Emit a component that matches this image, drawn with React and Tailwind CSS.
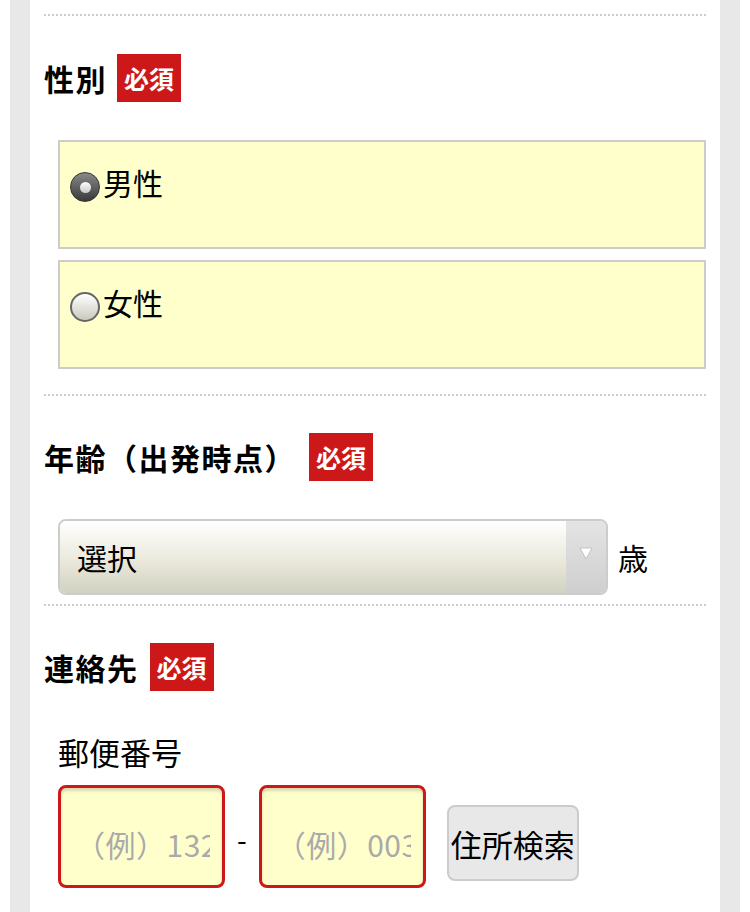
import { useState } from "react"

function Badge({ className = "ml-[13px]" }) {
  return (
    <span
      className={
        "inline-flex h-[48px] w-[64px] shrink-0 items-center justify-center bg-[#cc1818] text-[25px] font-bold leading-none text-white " +
        className
      }
    >
      必須
    </span>
  )
}

function Heading({ children, badgeGap }) {
  return (
    <div className="flex h-[48px] items-center">
      <h2 className="text-[30px] font-bold leading-none tracking-[1.5px] text-black">{children}</h2>
      <Badge className={badgeGap} />
    </div>
  )
}

function Radio({ checked }) {
  if (checked) {
    return (
      <span className="flex h-[30px] w-[30px] shrink-0 items-center justify-center rounded-full border border-[#333] bg-gradient-to-b from-[#8a8a8a] to-[#3a3a3a]">
        <span className="h-[11px] w-[11px] rounded-full bg-gradient-to-b from-[#ffffff] to-[#c8c8c8]" />
      </span>
    )
  }
  return (
    <span className="h-[30px] w-[30px] shrink-0 rounded-full border-2 border-[#666] bg-gradient-to-b from-[#ffffff] to-[#c9c9bd]" />
  )
}

function Dotted({ className = "" }) {
  return <div className={"border-t-2 border-dotted border-[#cccccc] " + className} />
}

const inputCls =
  "h-[103px] w-[167px] rounded-[8px] border-[3px] border-[#cc1818] bg-[#ffffcc] pl-[14px] pr-[12px] pt-[14px] text-[30px] tracking-[0.5px] shadow-[inset_0_3px_3px_rgba(0,0,0,0.15)] outline-none placeholder:text-[#aaaaaa]"

export default function App() {
  const [gender, setGender] = useState("male")

  return (
    <div className="min-h-[912px] bg-white px-[10px] font-['Noto_Sans_CJK_JP','Noto_Sans',sans-serif] text-black">
      <div className="min-h-[912px] bg-[#e8e8e8] px-[20px]">
        <div className="min-h-[912px] bg-white px-[14px] pb-[40px] pt-[14px]">
          <Dotted />

          {/* 性別 */}
          <div className="mt-[38px]">
            <Heading badgeGap="ml-[10px]">性別</Heading>
          </div>
          <div className="mt-[38px] flex flex-col gap-[11px] pl-[14px]">
            {[
              ["male", "男性"],
              ["female", "女性"],
            ].map(([key, label]) => (
              <button
                key={key}
                onClick={() => setGender(key)}
                className="flex h-[109px] items-start border-2 border-[#cccccc] bg-[#ffffcc] pl-[10px] pt-[30px] text-left"
              >
                <Radio checked={gender === key} />
                <span className="ml-[3px] -mt-[8px] text-[30px] leading-[36px]">{label}</span>
              </button>
            ))}
          </div>

          <Dotted className="mt-[25px]" />

          {/* 年齢 */}
          <div className="mt-[37px]">
            <Heading badgeGap="ml-[13px]">年齢（出発時点）</Heading>
          </div>
          <div className="mt-[38px] flex items-center pl-[14px]">
            <div className="flex h-[76px] w-[550px] overflow-hidden rounded-[8px] border-2 border-[#cccccc]">
              <div className="flex flex-1 items-center bg-gradient-to-b from-[#ffffff] via-[#ecebdf] to-[#d2d2c0] pl-[17px] text-[30px]">
                選択
              </div>
              <div className="flex w-[40px] justify-center bg-gradient-to-b from-[#e4e4e4] to-[#cfcfcf] pt-[26px]">
                <svg width="14" height="13" viewBox="0 0 14 13">
                  <path d="M1 1 H13 L7 12 Z" fill="#ffffff" stroke="#b8b8b8" strokeWidth="0.8" />
                </svg>
              </div>
            </div>
            <span className="ml-[10px] text-[30px] leading-none">歳</span>
          </div>

          <Dotted className="mt-[9px]" />

          {/* 連絡先 */}
          <div className="mt-[37px]">
            <Heading badgeGap="ml-[11px]">連絡先</Heading>
          </div>

          <div className="mt-[43px] pl-[14px] text-[31px] leading-[36px]">郵便番号</div>

          <div className="mt-[15px] flex items-start pl-[14px]">
            <input placeholder="（例）1320000" className={inputCls} />
            <span className="mx-[12px] mt-[40px] text-[28px] leading-none">-</span>
            <input placeholder="（例）0031" className={inputCls} />
            <button className="ml-[21px] mt-[20px] flex h-[76px] w-[132px] items-center justify-center rounded-[8px] border-2 border-[#cccccc] bg-[#e8e8e8] text-[31px] leading-none">
              住所検索
            </button>
          </div>
        </div>
      </div>
    </div>
  )
}
